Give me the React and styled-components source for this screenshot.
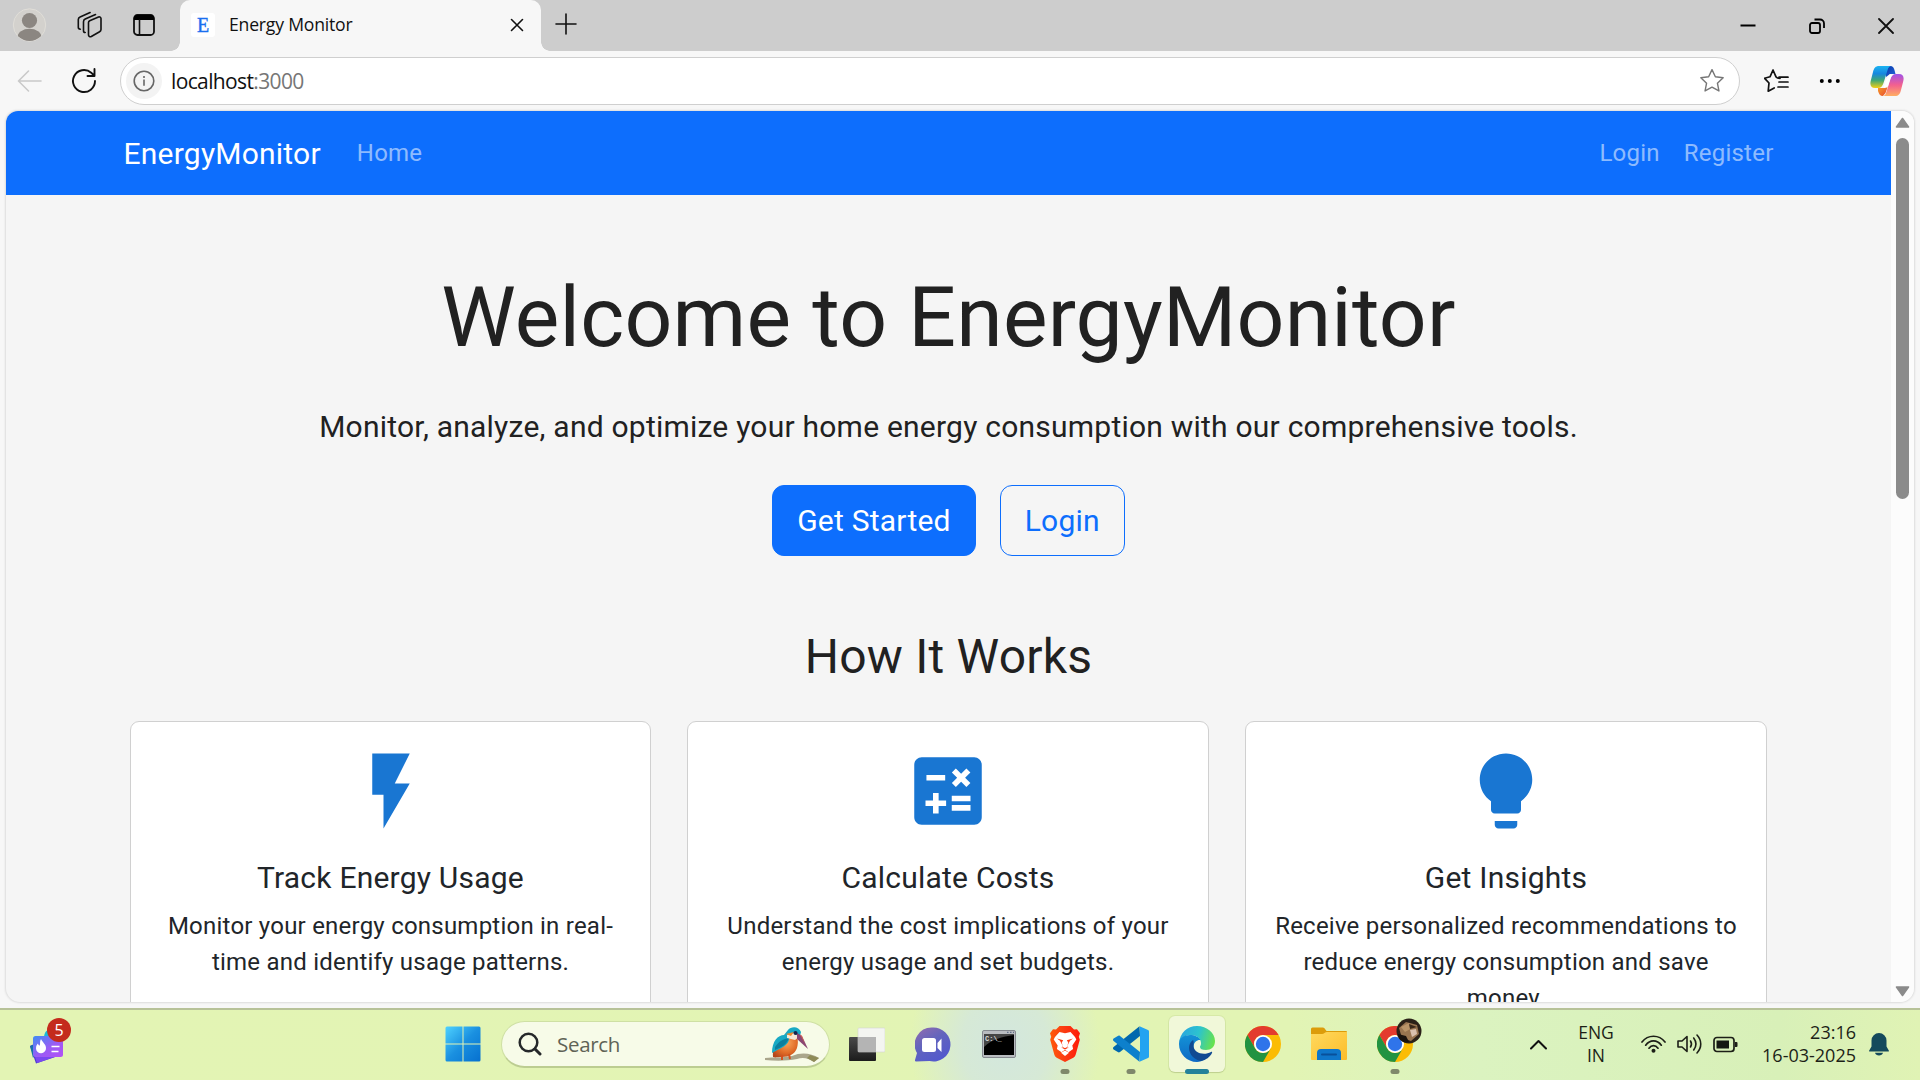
import React from "react";
import styled, { createGlobalStyle, css } from "styled-components";

const ui = `"Open Sans", "Noto Sans", sans-serif`;

const GlobalStyle = createGlobalStyle`
  *, *::before, *::after { box-sizing: border-box; }
  html, body { margin: 0; padding: 0; }
  body { width: 1920px; height: 1080px; overflow: hidden; font-family: Roboto, sans-serif; color: #212529; }
  svg { display: block; flex: none; }
  h1, h2, h3, p { margin: 0; font-weight: 400; }
`;

const Desktop = styled.div`
  width: 1920px;
  height: 1080px;
  display: flex;
  flex-direction: column;
  background: #f7f7f7;
  overflow: hidden;
`;

/* ---------- browser chrome ---------- */
const TitleBar = styled.header`
  height: 51px;
  flex: none;
  display: flex;
  align-items: center;
  background: #cdcdcd;
  padding: 0 0 0 11px;
`;

const TitleTools = styled.div`
  width: 169px;
  flex: none;
  display: flex;
  align-items: center;
  gap: 28px;
  padding-bottom: 2px;
`;

const Avatar = styled.div`
  width: 38px;
  height: 34px;
  margin-right: -1px;
`;

const Tab = styled.div`
  position: relative;
  width: 361px;
  height: 51px;
  flex: none;
  display: flex;
  align-items: center;
  padding: 0 14px 2px 11px;
  background: #f7f7f7;
  border-radius: 10px 10px 0 0;
  font: 17.6px/24px ${ui};
  letter-spacing: -0.2px;
  color: #111;
  &::before, &::after {
    content: "";
    position: absolute;
    bottom: 0;
    width: 9px;
    height: 9px;
  }
  &::before { left: -9px; background: radial-gradient(circle at 0 0, transparent 8.5px, #f7f7f7 9px); }
  &::after { right: -9px; background: radial-gradient(circle at 100% 0, transparent 8.5px, #f7f7f7 9px); }
`;

const Favicon = styled.span`
  width: 24px;
  height: 24px;
  margin-right: 14px;
  display: grid;
  place-items: center;
  background: #fff;
  border-radius: 3px;
  color: #1a6fef;
  font: 400 20px/24px "Liberation Serif", serif;
  -webkit-text-stroke: 0.4px #1a6fef;
`;

const TabTitle = styled.span`
  flex: 1;
  padding-bottom: 2px;
  white-space: nowrap;
`;

const WindowControls = styled.div`
  margin-left: auto;
  display: flex;
  align-items: center;
`;

const ControlButton = styled.div`
  width: 69px;
  height: 51px;
  display: grid;
  place-items: center;
`;

const Toolbar = styled.div`
  height: 60px;
  flex: none;
  display: flex;
  align-items: center;
  padding: 0 16px 0 17px;
`;

const AddressBar = styled.div`
  width: 1620px;
  height: 48px;
  margin-left: 22px;
  display: flex;
  align-items: center;
  padding: 0 14px 0 5px;
  background: #fff;
  border: 1px solid #cfcfcf;
  border-radius: 24px;
  font: 21px/28px ${ui};
  letter-spacing: -0.63px;
  color: #111;
`;

const InfoButton = styled.span`
  width: 36px;
  height: 36px;
  margin-right: 9px;
  display: grid;
  place-items: center;
  background: #f3f3f3;
  border-radius: 50%;
`;

const Url = styled.span`
  flex: 1;
  white-space: nowrap;
`;

const Port = styled.span`
  color: #767676;
`;

const ToolbarEnd = styled.div`
  margin-left: auto;
  display: flex;
  align-items: center;
  gap: 29px;
`;

/* ---------- page ---------- */
const Viewport = styled.main`
  height: 891px;
  flex: none;
  margin: 0 6px;
  display: flex;
  background: #f5f5f5;
  border-radius: 12px 12px 14px 14px;
  box-shadow: 0 0 2px 1px #dcdcdc;
  overflow: hidden;
`;

const Page = styled.div`
  width: 1885px;
  height: 891px;
  display: flex;
  flex-direction: column;
  align-items: center;
  overflow: hidden;
  letter-spacing: 0.225px;
`;

const Navbar = styled.nav`
  width: 100%;
  height: 84px;
  flex: none;
  display: flex;
  align-items: center;
  padding: 0 117.5px;
  background: #0d6efd;
  color: #fff;
`;

const Brand = styled.span`
  font-size: 30px;
  line-height: 45px;
`;

const NavLink = styled.a`
  font-size: 24px;
  line-height: 36px;
  color: rgba(255, 255, 255, 0.55);
  ${(p) => p.$first && css`margin-left: 36px; margin-right: auto;`}
  ${(p) => p.$last && css`margin-left: 24px;`}
`;

const Hero = styled.section`
  display: flex;
  flex-direction: column;
  align-items: center;
  color: #212121;
`;

const HeroTitle = styled.h1`
  margin-top: 73px;
  font-size: 84px;
  line-height: 100.8px;
  white-space: nowrap;
`;

const Lead = styled.p`
  margin-top: 35px;
  font-size: 30px;
  line-height: 45px;
  white-space: nowrap;
`;

const Actions = styled.div`
  display: flex;
  gap: 24px;
  margin-top: 36px;
`;

const Button = styled.button`
  height: 71px;
  padding: 0 24px;
  border: 1px solid #0d6efd;
  border-radius: 12px;
  background: ${(p) => (p.$outline ? "transparent" : "#0d6efd")};
  color: ${(p) => (p.$outline ? "#0d6efd" : "#fff")};
  font: 30px/45px Roboto, sans-serif;
  letter-spacing: 0.225px;
`;

const SectionTitle = styled.h2`
  margin-top: 72px;
  font-size: 48px;
  line-height: 57.6px;
  color: #212121;
`;

const Cards = styled.section`
  width: 1637px;
  margin-top: 36px;
  display: grid;
  grid-template-columns: 521px 522px 522px;
  gap: 36px;
`;

const Card = styled.article`
  height: 330px;
  padding: 24px;
  display: flex;
  flex-direction: column;
  align-items: center;
  background: #fff;
  border: 1px solid #d0d0d0;
  border-radius: 9px;
  text-align: center;
`;

const CardTitle = styled.h3`
  margin-top: 24px;
  font-size: 30px;
  line-height: 36px;
`;

const CardText = styled.p`
  margin-top: 12px;
  font-size: 24px;
  line-height: 36px;
`;

const Scrollbar = styled.div`
  width: 23px;
  height: 891px;
  display: flex;
  flex-direction: column;
  align-items: center;
  background: #fcfcfc;
  padding: 6px 0 5px;
`;

const Thumb = styled.div`
  width: 13px;
  height: 361px;
  margin: 10px 0 auto;
  border-radius: 7px;
  background: #8b8b8b;
`;

/* ---------- taskbar ---------- */
const Taskbar = styled.footer`
  height: 72px;
  margin-top: 6px;
  padding-bottom: 2px;
  flex: none;
  display: flex;
  align-items: center;
  border-top: 2px solid #b7c298;
  background:
    radial-gradient(ellipse 95px 110px at 1005px 50%, #d3e7de 0%, #d6e9d6 45%, transparent 100%),
    linear-gradient(90deg, #e3f4b4 0, #e2f4b4 1290px, #dbf3c0 1480px, #d8f0b8 1780px, #e0f3b4 1920px);
  font-family: ${ui};
  color: #1c1f17;
`;

const WidgetSlot = styled.div`
  position: relative;
  width: 430px;
  padding: 2px 0 0 30px;
`;

const Badge = styled.span`
  position: absolute;
  left: 47px;
  top: -6px;
  width: 24px;
  height: 24px;
  border-radius: 50%;
  background: #c42b1c;
  color: #fff;
  font: 16px/24px ${ui};
  text-align: center;
`;

const AppSlot = styled.div`
  position: relative;
  width: 66px;
  height: 70px;
  flex: none;
  display: grid;
  place-items: center;
`;

const ActiveTile = styled.div`
  width: 56px;
  height: 56px;
  display: grid;
  place-items: center;
  border-radius: 6px;
  background: #f1f8d9;
  box-shadow: 0 0 0 1px rgba(120, 140, 60, 0.1), 0 1px 1px rgba(90, 110, 40, 0.2);
`;

const Indicator = styled.span`
  position: absolute;
  left: 50%;
  bottom: 5px;
  width: ${(p) => (p.$active ? 24 : 9)}px;
  height: 5px;
  transform: translateX(-50%);
  border-radius: 3px;
  background: ${(p) => (p.$active ? "#23829a" : "#7f886b")};
`;

const ProfilePhoto = styled.span`
  position: absolute;
  left: 34px;
  top: 9px;
  width: 26px;
  height: 26px;
`;

const SearchBox = styled.div`
  width: 329px;
  height: 47px;
  margin: 0 4px 0 5px;
  flex: none;
  display: flex;
  align-items: center;
  padding: 0 9px 0 16px;
  border: 1px solid #cfe0a4;
  border-bottom: 2px solid #bccd91;
  border-radius: 24px;
  background: #f7fbe8;
  font-size: 20.5px;
  letter-spacing: -0.3px;
  color: #5f6356;
`;

const SearchLabel = styled.span`
  flex: 1;
  margin-left: 15px;
`;

const Tray = styled.div`
  margin-left: auto;
  display: flex;
  align-items: center;
  padding-right: 31px;
  font-size: 17.5px;
  line-height: 23px;
`;

const Language = styled.div`
  width: 50px;
  margin: 0 20px 0 24px;
  text-align: center;
  letter-spacing: -0.1px;
`;

const StatusIcons = styled.div`
  display: flex;
  align-items: center;
  gap: 11px;
`;

const Clock = styled.div`
  width: 118px;
  margin-right: 13px;
  text-align: right;
  font-size: 18px;
  white-space: nowrap;
`;

const line = { fill: "none", stroke: "#111", strokeWidth: 1.6, strokeLinecap: "round", strokeLinejoin: "round" };

const ChromeLogo = () => (
  <svg width="36" height="36" viewBox="0 0 48 48">
    <circle cx="24" cy="24" r="24" fill="#fbbc04" />
    <path d="M3.2 12A24 24 0 0 1 44.8 12H24A12 12 0 0 0 13.6 30z" fill="#e33b2e" />
    <path d="M3.2 12A24 24 0 0 0 24 48L34.4 30A12 12 0 0 1 13.6 30z" fill="#229342" />
    <circle cx="24" cy="24" r="12" fill="#fff" />
    <circle cx="24" cy="24" r="9.6" fill="#2f74ea" />
  </svg>
);

const StarShape = "M12 1.5l3.1 6.6 7.2.9-5.3 5 1.4 7.2L12 17.7l-6.4 3.5L7 14 1.7 9l7.2-.9z";

const cards = [
  {
    title: "Track Energy Usage",
    text: "Monitor your energy consumption in real-time and identify usage patterns.",
    path: "M7 2v11h3v9l7-12h-4l4-8z",
  },
  {
    title: "Calculate Costs",
    text: "Understand the cost implications of your energy usage and set budgets.",
    path: "M19 3H5c-1.1 0-2 .9-2 2v14c0 1.1.9 2 2 2h14c1.1 0 2-.9 2-2V5c0-1.1-.9-2-2-2zm-5.97 4.06L14.09 6l1.41 1.41L16.91 6l1.06 1.06-1.41 1.41 1.41 1.41-1.06 1.06-1.41-1.4-1.41 1.41-1.06-1.06 1.41-1.41-1.41-1.42zm-6.78.66h5v1.5h-5v-1.5zM11.5 16h-2v2H8v-2H6v-1.5h2v-2h1.5v2h2V16zm6.5 1.25h-5v-1.5h5v1.5zm0-2.5h-5v-1.5h5v1.5z",
  },
  {
    title: "Get Insights",
    text: "Receive personalized recommendations to reduce energy consumption and save money.",
    path: "M9 21c0 .5.4 1 1 1h4c.6 0 1-.5 1-1v-1H9v1zm3-19C8.1 2 5 5.1 5 9c0 2.4 1.2 4.5 3 5.7V17c0 .5.4 1 1 1h6c.6 0 1-.5 1-1v-2.3c1.8-1.3 3-3.4 3-5.7 0-3.9-3.1-7-7-7z",
  },
];

function BrowserChrome() {
  return (
    <>
      <TitleBar>
        <TitleTools>
          <Avatar>
            <svg width="38" height="34" viewBox="0 0 38 34">
              <defs><clipPath id="av"><circle cx="18.5" cy="17" r="16" /></clipPath></defs>
              <circle cx="18.5" cy="17" r="16.2" fill="#d3d1cd" stroke="#e0ded8" />
              <g clipPath="url(#av)" fill="#8b8681">
                <circle cx="18.5" cy="12.5" r="7.6" />
                <ellipse cx="18.5" cy="29" rx="12" ry="8.2" />
              </g>
            </svg>
          </Avatar>
          <svg width="28" height="28" viewBox="0 0 28 28">
            <g {...line}>
              <path d="M12.500 11.600c0-.8.4-1.500 1.200-1.900l8.800-3.700c1.200-.5 2.500.2 2.500 1.500v11c0 1-.5 1.700-1.400 2.200l-8.300 4.800c-1.300.7-2.800 0-2.800-1.500z" />
              <path d="M9.200 21.500c-1 0-1.700-.8-1.700-1.800v-9c0-1.200.6-2.100 1.700-2.600l10.300-4.600" />
              <path d="M4.300 18.300c-1.300-.1-2-.9-2-2V8.600c0-1.300.6-2.200 1.800-2.700l10-4.400" />
            </g>
          </svg>
          <svg width="24" height="24" viewBox="0 0 24 24">
            <rect x="2" y="2" width="20" height="20" rx="3.5" {...line} strokeWidth="1.8" />
            <path d="M2 7V5a3 3 0 0 1 3-3h14a3 3 0 0 1 3 3v2z" fill="#000" />
            <path d="M7.5 7v14.5" {...line} />
          </svg>
        </TitleTools>
        <Tab>
          <Favicon>E</Favicon>
          <TabTitle>Energy Monitor</TabTitle>
          <svg width="20" height="20" viewBox="0 0 20 20"><path d="M4.500 4.500l11 11M15.500 4.500l-11 11" {...line} /></svg>
        </Tab>
        <svg width="50" height="28" viewBox="0 0 50 28">
          <path d="M25 2v20M15 12h20" {...line} />
        </svg>
        <WindowControls>
          <ControlButton><svg width="16" height="16" viewBox="0 0 16 16"><path d="M0.500 7.500h15" stroke="#000" strokeWidth="2" /></svg></ControlButton>
          <ControlButton>
            <svg width="16" height="16" viewBox="0 0 16 16" fill="none" stroke="#000" strokeWidth="1.8">
              <rect x="1" y="5" width="10" height="10" rx="2" />
              <path d="M5.500 1.500H11a4 4 0 0 1 4 4V10" />
            </svg>
          </ControlButton>
          <ControlButton><svg width="16" height="16" viewBox="0 0 16 16"><path d="M1 1l14 14M15 1L1 15" {...line} strokeWidth="1.8" /></svg></ControlButton>
        </WindowControls>
      </TitleBar>
      <Toolbar>
        <svg width="53" height="24" viewBox="0 0 53 24"><path d="M24 12H2M11.500 2L1.500 12l10 10" {...line} stroke="#c9c9c9" /></svg>
        <svg width="28" height="28" viewBox="0 0 28 28">
          <path d="M25 14a11 11 0 1 1-3.800-8.300L24 8.500M24.500 2v7h-7" {...line} strokeWidth="1.9" />
        </svg>
        <AddressBar>
          <InfoButton>
            <svg width="22" height="22" viewBox="0 0 22 22" fill="none" stroke="#666" strokeWidth="1.6">
              <circle cx="11" cy="11" r="9.8" /><path d="M11 9.500v6.300M11 6v2" />
            </svg>
          </InfoButton>
          <Url>localhost<Port>:3000</Port></Url>
          <svg width="26" height="26" viewBox="0 0 24 24"><path d={StarShape} {...line} strokeWidth="1.3" stroke="#767676" /></svg>
        </AddressBar>
        <ToolbarEnd>
          <svg width="26" height="26" viewBox="0 0 26 26">
            <path d="M16 10.300l-2.700-.5L12 8.800 9 2 6 8.800l-5.500 1.400 4.500 4.800-.8 8.200 6-3.300M15 9.200h9M15 14h9M14 19h10" {...line} strokeWidth="1.7" />
          </svg>
          <svg width="22" height="8" viewBox="0 0 22 8"><circle cx="2.800" cy="4" r="2" /><circle cx="10.800" cy="4" r="2" /><circle cx="18.800" cy="4" r="2" /></svg>
          <svg width="34" height="32" viewBox="0 0 34 32">
            <defs>
              <linearGradient id="cpA" x1="0" y1="0" x2="0" y2="1"><stop offset="0" stopColor="#1cb4f2" /><stop offset=".35" stopColor="#1687df" /><stop offset=".65" stopColor="#3fa775" /><stop offset="1" stopColor="#f3cf13" /></linearGradient>
              <linearGradient id="cpB" x1="0" y1="0" x2="0" y2="1"><stop offset="0" stopColor="#a052e8" /><stop offset=".5" stopColor="#f3608f" /><stop offset="1" stopColor="#ffae62" /></linearGradient>
              <linearGradient id="cpC" x1="0" y1="0" x2="1" y2="1"><stop offset="0" stopColor="#0a3aab" /><stop offset="1" stopColor="#2165d9" /></linearGradient>
              <linearGradient id="cpD" x1="0" y1="0" x2="1" y2="1"><stop offset="0" stopColor="#f6a32a" /><stop offset="1" stopColor="#e8442f" /></linearGradient>
            </defs>
            <path d="M16 1h4c3 0 4 2 4.600 4.500L25.500 9H20l-4 3z" fill="url(#cpC)" />
            <path d="M8 23h7l3-2-2.500 7-2.500 3c-3 0-4-2-5-5z" fill="url(#cpD)" />
            <path d="M9 1h13c-3 0-3.800 2-4.700 5l-3.800 12c-1 3-2.500 5-5.500 5H5c-4 0-5.300-3-4.300-7l2.300-9c1-4 2.500-6 6-6z" fill="url(#cpA)" />
            <path d="M25 31H12c3 0 3.800-2 4.700-5l3.800-12c1-3 2.500-5 5.500-5H29c4 0 5.300 3 4.300 7l-2.300 9c-1 4-2.500 6-6 6z" fill="url(#cpB)" />
            <path d="M19.500 9.500h2.500l-1.500 3.500-3 9.500h-4L16 15z" fill="#fff" />
          </svg>
        </ToolbarEnd>
      </Toolbar>
    </>
  );
}

function HomePage() {
  return (
    <Viewport>
      <Page>
        <Navbar>
          <Brand>EnergyMonitor</Brand>
          <NavLink $first>Home</NavLink>
          <NavLink>Login</NavLink>
          <NavLink $last>Register</NavLink>
        </Navbar>
        <Hero>
          <HeroTitle>Welcome to EnergyMonitor</HeroTitle>
          <Lead>Monitor, analyze, and optimize your home energy consumption with our comprehensive tools.</Lead>
          <Actions>
            <Button>Get Started</Button>
            <Button $outline>Login</Button>
          </Actions>
        </Hero>
        <SectionTitle>How It Works</SectionTitle>
        <Cards>
          {cards.map((c) => (
            <Card key={c.title}>
              <svg width="90" height="90" viewBox="0 0 24 24" fill="#1976d2"><path d={c.path} /></svg>
              <CardTitle>{c.title}</CardTitle>
              <CardText>{c.text}</CardText>
            </Card>
          ))}
        </Cards>
      </Page>
      <Scrollbar>
        <svg width="15" height="11" viewBox="0 0 15 11"><path d="M7.500 1.500L13.500 10h-12z" fill="#8b8b8b" stroke="#8b8b8b" strokeWidth="1.6" strokeLinejoin="round" /></svg>
        <Thumb />
        <svg width="15" height="11" viewBox="0 0 15 11"><path d="M7.500 9.500L13.500 1h-12z" fill="#8b8b8b" stroke="#8b8b8b" strokeWidth="1.6" strokeLinejoin="round" /></svg>
      </Scrollbar>
    </Viewport>
  );
}

function WindowsTaskbar() {
  return (
    <Taskbar>
      <WidgetSlot>
        <svg width="34" height="38" viewBox="0 0 34 38">
          <defs><linearGradient id="wg" x1="0" y1="0" x2="1" y2="1"><stop offset="0" stopColor="#3f8df2" /><stop offset=".55" stopColor="#9a5cf5" /><stop offset="1" stopColor="#b350f5" /></linearGradient></defs>
          <path d="M14 12c0-5 2-8 6-9v9z" fill="#19b9d8" />
          <path d="M0 20l3-1.500L7 30l18 1-19 6.500z" fill="#4d3bcf" />
          <path d="M0 20l3-1 2 10-2 3z" fill="#1673a8" />
          <path d="M5 31h20L7 37z" fill="#7a49f0" />
          <rect x="3" y="10" width="30" height="21" rx="2.5" fill="url(#wg)" />
          <path d="M11 13c1 3 5 5 5 9a5 5 0 0 1-10 .5c0-3 1-4 2-5 .3 1.500 1 2 1.700 2C10.500 18 9.500 15 11 13z" fill="#fff" />
          <path d="M21.500 20.500h8M21.500 25.500h7" stroke="#fff" strokeWidth="1.6" />
        </svg>
        <Badge>5</Badge>
      </WidgetSlot>
      <AppSlot>
        <svg width="36" height="36" viewBox="0 0 36 36">
          <defs><linearGradient id="win" x1="0" y1="0" x2="1" y2="1"><stop offset="0" stopColor="#4fd2ff" /><stop offset=".5" stopColor="#1a90e0" /><stop offset="1" stopColor="#0670cf" /></linearGradient></defs>
          <path d="M2 .5h15.500v17H.5V2A1.500 1.500 0 0 1 2 .5zM18.500.5H34A1.500 1.500 0 0 1 35.500 2v15.500h-17zM.5 18.500h17v17H2A1.500 1.500 0 0 1 .5 34zM18.500 18.500h17V34a1.500 1.500 0 0 1-1.500 1.500H18.500z" fill="url(#win)" />
        </svg>
      </AppSlot>
      <SearchBox>
        <svg width="24" height="24" viewBox="0 0 24 24" fill="none" stroke="#25282a" strokeLinecap="round"><circle cx="10.500" cy="10.500" r="8.800" strokeWidth="2.500" /><path d="M17 17l5 5" strokeWidth="3" /></svg>
        <SearchLabel>Search</SearchLabel>
        <svg width="56" height="36" viewBox="0 0 56 36">
          <defs>
            <radialGradient id="belly" cx=".55" cy=".4" r=".7"><stop offset="0" stopColor="#f9a65a" /><stop offset=".6" stopColor="#e06a26" /><stop offset="1" stopColor="#b4461a" /></radialGradient>
          </defs>
          <path d="M1 32c9-1 17 0 27-2 9-4 19-3 27 2l-5 4c-6-4-11-5-17-3-10 2-21 2-32 1z" fill="#aaa68c" />
          <path d="M46 29l9 3-5 4-7-4z" fill="#8e8b57" />
          <path d="M9 31C8 19 17 8 27 7c7 1 8 8 6 15-2 6-8 9-15 9-4 0-7 1-9 0z" fill="url(#belly)" />
          <path d="M8 27C8 15 14 9 20 9l4-5c3-4 11-4 13 2l-1 4-9-1-2 4c0 6-8 9-17 14z" fill="#18a9c4" />
          <path d="M11 21c4-6 8-8 14-9-2 6-7 9-14 12z" fill="#0c7f9e" />
          <path d="M23 9l7-2 5 4-4 3-8-2z" fill="#f6ead8" />
          <path d="M22 8l8-2-3 4z" fill="#f08a2c" />
          <path d="M33 7l5 3 6 13-11-10z" fill="#8a4672" />
          <path d="M36 8l2 2 3 8z" fill="#e5634a" />
          <circle cx="31.500" cy="7" r="2" fill="#17244b" />
          <path d="M18 29v5M25 28l1 5" stroke="#d4501c" strokeWidth="2" />
        </svg>
      </SearchBox>
      <AppSlot>
        <svg width="36" height="36" viewBox="0 0 36 36">
          <defs><linearGradient id="tv" x1="0" y1="0" x2="0" y2="1"><stop offset="0" stopColor="#4a4a4a" /><stop offset="1" stopColor="#1c1c1c" /></linearGradient></defs>
          <rect x="0" y="11" width="27" height="24" rx="1" fill="url(#tv)" />
          <rect x="9" y="2" width="27" height="24" rx="1" fill="#f4f4f4" fillOpacity=".95" stroke="#d5d5d5" strokeWidth=".6" />
          <path d="M9 11h18v15H9z" fill="#b4b4b4" />
        </svg>
      </AppSlot>
      <AppSlot>
        <svg width="36" height="36" viewBox="0 0 36 36">
          <defs><linearGradient id="ch" x1=".2" y1="0" x2=".8" y2="1"><stop offset="0" stopColor="#8b6bb1" /><stop offset=".4" stopColor="#6264bd" /><stop offset="1" stopColor="#5157cf" /></linearGradient></defs>
          <path d="M17.500 1.500a17 17 0 1 1-3 33.500L1 35.500c-1 0-1.300-.8-1-1.500l2-7A17 17 0 0 1 17.500 1.500z" fill="url(#ch)" />
          <rect x="7" y="12" width="14" height="14" rx="2.5" fill="#fff" />
          <path d="M22.500 17l4-4.500v13.500l-4-4z" fill="#fff" />
        </svg>
      </AppSlot>
      <AppSlot>
        <svg width="34" height="28" viewBox="0 0 34 28">
          <rect x=".5" y=".5" width="33" height="27" rx="1.5" fill="#b9bcc0" stroke="#85898f" />
          <path d="M2 4h30v21H2z" fill="#000" />
          <path d="M2 4h30v1C20 7 10 9 2 17z" fill="#454545" />
          <path d="M25 2.300h1.500M28 2.300h1.500M31 2.300h1" stroke="#4b5a7a" />
          <text x="3" y="11" fill="#ddd" fontFamily="Liberation Mono, monospace" fontSize="7" fontWeight="700">C:\_</text>
        </svg>
      </AppSlot>
      <AppSlot>
        <svg width="32" height="36" viewBox="0 0 32 36">
          <defs><linearGradient id="br" x1="0" y1="0" x2="1" y2="0"><stop offset="0" stopColor="#ff5a0a" /><stop offset=".5" stopColor="#fb3a12" /><stop offset="1" stopColor="#ff1a08" /></linearGradient></defs>
          <path d="M10.500 0h11l3.500 3.500 3-.3 3 4-1.200 3.500 1 3-4 14.500c-.5 1.700-1 2.500-2.500 3.500L16 36l-8.300-4.300c-1.500-1-2-1.800-2.500-3.500l-4-14.500 1-3L1 7.200l3-4 3 .3z" fill="url(#br)" />
          <path d="M16 7.200l5.500-1.200 4.500 5 1.300 2.500-4 6 .8 3.500-4.600 3.200L16 23.800l-3.500 2.400-4.600-3.200.8-3.500-4-6L6 11l4.500-5z" fill="#fff" />
          <path d="M8 12.500l6.200 1.800-1.500 2.200 1 3.500-1.400 2.500 1.200-3-2.500-4.700zM24 12.500l-6.200 1.800 1.500 2.200-1 3.500 1.400 2.500-1.200-3 2.500-4.700z" fill="#fb3a12" />
          <path d="M13.500 21.500L16 22.800l2.500-1.300" fill="none" stroke="#fb3a12" strokeWidth="1.100" />
          <path d="M16 24.500l4 2.200-4 3.300-4-3.300z" fill="#fff" />
        </svg>
        <Indicator />
      </AppSlot>
      <AppSlot>
        <svg width="36" height="36" viewBox="0 0 36 36">
          <path d="M26.500.3L27 10 7 26c-.8.700-1.500.6-2.200 0L.6 23.500c-.8-.7-.8-1.800 0-2.500z" fill="#0068ae" />
          <path d="M26.500 35.700L27 26 7 10c-.8-.7-1.500-.6-2.200 0L.6 12.500c-.8.7-.8 1.800 0 2.500z" fill="#0d80cc" />
          <path d="M26.500.3L35 4c.7.300 1 .8 1 1.600v24.800c0 .8-.3 1.300-1 1.600l-8.500 3.700c.3-.4.500-.8.5-1.500V1.800c0-.7-.2-1.100-.5-1.500z" fill="#23a3f1" />
        </svg>
        <Indicator />
      </AppSlot>
      <AppSlot>
        <ActiveTile>
          <svg width="36" height="36" viewBox="0 0 36 36">
            <defs>
              <linearGradient id="eg" x1="0" y1=".4" x2="1" y2=".6"><stop offset="0" stopColor="#2aa5df" /><stop offset=".5" stopColor="#2cc3cf" /><stop offset="1" stopColor="#68e34a" /></linearGradient>
              <linearGradient id="eb" x1="0" y1="0" x2="0" y2="1"><stop offset="0" stopColor="#1492d6" /><stop offset="1" stopColor="#0d69c4" /></linearGradient>
            </defs>
            <path d="M0 17C1 7 8 0 18 0s18 7 18 15c0 6-4 9-9 9-4 0-6-1-6-3 0-1 1-1 1-4 0-4-4-8-10-8C6 9 2 12 0 17z" fill="url(#eg)" />
            <path d="M0 18c0-6 5-9 11-9 5 0 9 2 10.500 5-3-.5-7 2-7 7 0 7 6 14 12 12-3 2-6 3-8.500 3C8 36 0 28 0 18z" fill="url(#eb)" />
            <path d="M14 14c-3 2-4 5-4 8 0 7 6 12 12 13 5-1 9-4 11-8 .5-1-.3-1.500-1-1-7 4-18 1-17.500-7 .1-2 .5-4-.5-5z" fill="#114a92" />
          </svg>
        </ActiveTile>
        <Indicator $active />
      </AppSlot>
      <AppSlot><ChromeLogo /></AppSlot>
      <AppSlot>
        <svg width="36" height="34" viewBox="0 0 36 34">
          <defs><linearGradient id="fo" x1="0" y1="0" x2="1" y2="1"><stop offset="0" stopColor="#ffd95e" /><stop offset="1" stopColor="#fcbd2a" /></linearGradient></defs>
          <path d="M0 2a1.500 1.500 0 0 1 1.500-1.500h10c1 0 2 .5 2.500 1.500l1.500 2H35a1 1 0 0 1 1 1v6H0z" fill="#dc9c0b" />
          <path d="M0 7h11c2 0 3-2 5-2h20v27a1 1 0 0 1-1 1H1a1 1 0 0 1-1-1z" fill="url(#fo)" />
          <path d="M6 33v-7a4 4 0 0 1 4-4h16a4 4 0 0 1 4 4v7z" fill="#0f76ca" />
          <path d="M11 27.500h14" stroke="#09509a" strokeWidth="2" strokeLinecap="round" />
        </svg>
      </AppSlot>
      <AppSlot>
        <ChromeLogo />
        <ProfilePhoto>
          <svg width="26" height="26" viewBox="0 0 26 26">
            <defs><clipPath id="ph"><circle cx="13" cy="13" r="12.500" /></clipPath></defs>
            <g clipPath="url(#ph)">
              <path d="M0 0h26v26H0z" fill="#2b2118" />
              <path d="M3 10l7-6 11 3 2 9-8 7-9-3z" fill="#9a7550" />
              <path d="M5 9l8-4 3 5-7 4z" fill="#b99468" />
              <path d="M14 12l6-1 1 5-5 3z" fill="#dac0ad" />
              <path d="M2 16l8 2 3 6-9 1z" fill="#1a120d" />
              <path d="M13 6l8 3-7 2z" fill="#3b291b" />
            </g>
          </svg>
        </ProfilePhoto>
        <Indicator />
      </AppSlot>
      <Tray>
        <svg width="17" height="11" viewBox="0 0 17 11"><path d="M1 9.500l7.500-7.500L16 9.500" {...line} strokeWidth="2" /></svg>
        <Language>ENG<br />IN</Language>
        <StatusIcons>
          <svg width="25" height="20" viewBox="0 0 25 20" fill="none" stroke="#1c1f17" strokeWidth="1.7" strokeLinecap="round">
            <path d="M1 8C7 .3 18 .3 24 8M4.700 11.200C9 5.500 16 5.500 20.300 11.200M8 14.200c2.500-3.500 6.500-3.500 9 0" />
            <circle cx="12.500" cy="16.700" r="2" fill="#1c1f17" stroke="none" />
          </svg>
          <svg width="25" height="22" viewBox="0 0 25 22" fill="none" stroke="#1c1f17" strokeWidth="1.6" strokeLinecap="round" strokeLinejoin="round">
            <path d="M1 8v6h4l5 4.500V3.500L5 8zM13.500 8c1.300 2 1.300 4 0 6M16.700 5c3 4 3 8 0 12M20 2c5 5.500 5 12.500 0 18" />
          </svg>
          <svg width="25" height="17" viewBox="0 0 25 17">
            <rect x="1" y="1.500" width="20" height="14" rx="3" fill="none" stroke="#1c1f17" strokeWidth="1.7" />
            <path d="M3.500 4.500h12.500v8H3.500z" fill="#151812" /><path d="M22 6h1.500q1 0 1 1v3q0 1-1 1H22z" fill="#1c1f17" />
          </svg>
        </StatusIcons>
        <Clock>23:16<br />16-03-2025</Clock>
        <svg width="20" height="24" viewBox="0 0 20 24">
          <path d="M10 1a7.500 7.500 0 0 1 7.500 7.500v6l2.300 4c.3.600 0 1-.6 1H.8c-.6 0-.9-.4-.6-1l2.300-4v-6A7.500 7.500 0 0 1 10 1zM6 20.800h8c-.5 1.800-2 2.700-4 2.700s-3.500-.9-4-2.700z" fill="#144a5c" />
        </svg>
      </Tray>
    </Taskbar>
  );
}

export default function App() {
  return (
    <Desktop>
      <GlobalStyle />
      <BrowserChrome />
      <HomePage />
      <WindowsTaskbar />
    </Desktop>
  );
}
